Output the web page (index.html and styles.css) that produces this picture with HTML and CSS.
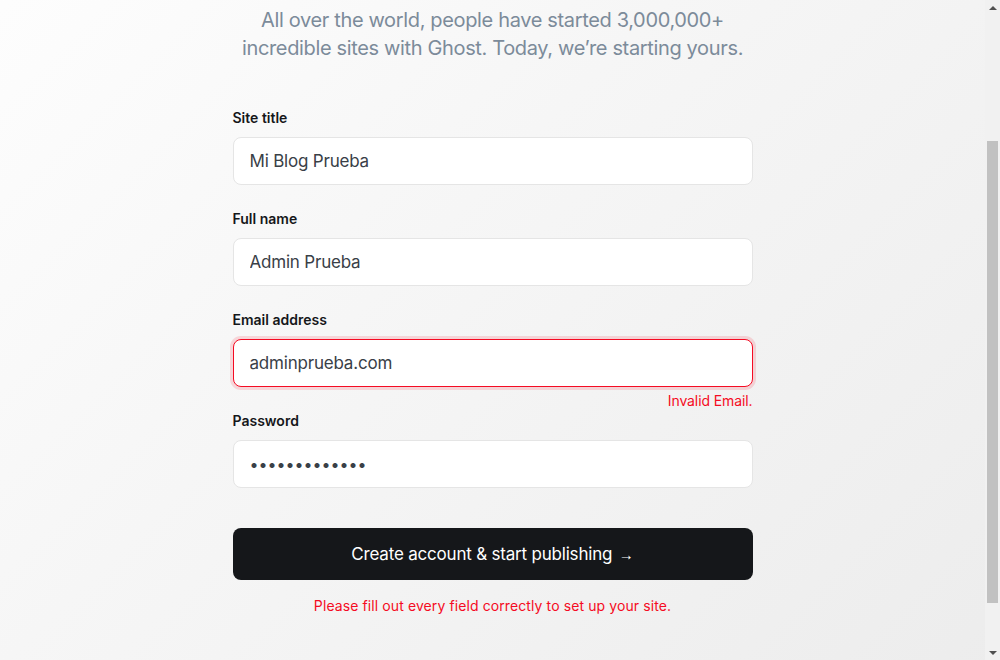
FILE: index.html
```html
<!DOCTYPE html>
<html lang="en">
<head>
<meta charset="utf-8">
<title>Ghost Admin - Setup</title>
<link rel="stylesheet" href="styles.css">
</head>
<body>
<main class="page">
  <header class="intro">
    <h1 class="title">Let’s get started.</h1>
    <p class="subtitle">All over the world, people have started 3,000,000+ incredible sites with Ghost. Today, we’re starting yours.</p>
  </header>
  <form class="setup-form" novalidate>
    <div class="field">
      <label class="label" for="site-title">Site title</label>
      <input class="input" id="site-title" type="text" value="Mi Blog Prueba">
      <div class="hint"></div>
    </div>
    <div class="field">
      <label class="label" for="full-name">Full name</label>
      <input class="input" id="full-name" type="text" value="Admin Prueba">
      <div class="hint"></div>
    </div>
    <div class="field">
      <label class="label" for="email">Email address</label>
      <input class="input input-error" id="email" type="email" value="adminprueba.com">
      <div class="hint hint-error">Invalid Email.</div>
    </div>
    <div class="field">
      <label class="label" for="password">Password</label>
      <input class="input" id="password" type="password" value="abcdefghijklm">
      <div class="hint"></div>
    </div>
    <button class="submit" type="button">Create account &amp; start publishing <span class="arrow">→</span></button>
    <p class="form-error">Please fill out every field correctly to set up your site.</p>
  </form>
</main>
<div class="scrollbar" aria-hidden="true">
  <div class="sb-btn sb-up"><span class="tri tri-up"></span></div>
  <div class="sb-track"><div class="sb-thumb"></div></div>
  <div class="sb-btn sb-down"><span class="tri tri-down"></span></div>
</div>
<script src="script.js"></script>
</body>
</html>
```

FILE: styles.css
```css
html, body {
  margin: 0;
  padding: 0;
}

body {
  font-family: Inter, "Noto Sans", "Liberation Sans", sans-serif;
  color: #15171a;
  background: #f4f4f4;
}

.page {
  box-sizing: border-box;
  min-height: 900px;
  margin-right: 15px;
  padding: 128px 0 103px;
  background: linear-gradient(135deg, #ffffff 0%, #f6f6f6 45%, #ececec 100%);
  display: flex;
  flex-direction: column;
  align-items: center;
}

.intro {
  width: 540px;
  text-align: center;
}

.title {
  margin: 0 0 14px;
  font-size: 36px;
  line-height: 44px;
  font-weight: 700;
  color: #15171a;
  letter-spacing: -0.5px;
}

.subtitle {
  margin: 0;
  font-size: 20px;
  line-height: 28px;
  font-weight: 400;
  letter-spacing: -0.35px;
  color: #7c8b9a;
}

.setup-form {
  width: 520px;
  margin-top: 45px;
  display: flex;
  flex-direction: column;
}

.field {
  display: flex;
  flex-direction: column;
}

.label {
  font-size: 14px;
  line-height: 20px;
  padding-top: 1px;
  font-weight: 600;
  color: #15171a;
  margin-bottom: 9px;
}

.input {
  box-sizing: border-box;
  height: 48px;
  width: 100%;
  padding: 0 16px;
  border: 1px solid #e5e5e5;
  border-radius: 8px;
  background: #ffffff;
  font-family: Inter, "Noto Sans", "Liberation Sans", sans-serif;
  font-size: 17px;
  letter-spacing: -0.2px;
  color: #394047;
  outline: none;
}

.input[type="password"] {
  letter-spacing: 0;
  font-size: 16px;
}

.input-error {
  border-color: #f50b23;
  box-shadow: 0 0 0 3px rgba(245, 11, 35, 0.14);
}

.hint {
  height: 23px;
  box-sizing: border-box;
  padding-top: 4px;
  font-size: 14px;
  line-height: 20px;
  text-align: right;
}

.hint-error {
  color: #f50b23;
  letter-spacing: -0.1px;
}

.submit {
  margin-top: 17px;
  height: 52px;
  width: 100%;
  border: 0;
  border-radius: 8px;
  background: #15171a;
  color: #ffffff;
  font-family: Inter, "Noto Sans", "Liberation Sans", sans-serif;
  font-size: 17px;
  letter-spacing: -0.2px;
  font-weight: 400;
  cursor: pointer;
}

.arrow {
  font-family: "Liberation Sans", Arial, sans-serif;
  font-size: 15px;
  margin-left: 2px;
}

.form-error {
  margin: 15px 0 0;
  font-size: 14px;
  line-height: 22px;
  letter-spacing: 0.1px;
  text-align: center;
  color: #f50b23;
}

.scrollbar {
  position: fixed;
  top: 0;
  right: 0;
  bottom: 0;
  width: 15px;
  background: #f1f1f1;
  display: flex;
  flex-direction: column;
}

.sb-btn {
  height: 15px;
  flex: 0 0 15px;
  display: flex;
  align-items: center;
  justify-content: center;
}

.sb-track {
  flex: 1;
  position: relative;
}

.sb-thumb {
  position: absolute;
  left: 2px;
  right: 2px;
  top: 126px;
  height: 462px;
  background: #c1c1c1;
}

.tri {
  width: 0;
  height: 0;
  border-left: 4px solid transparent;
  border-right: 4px solid transparent;
}

.tri-up {
  border-bottom: 4px solid #505050;
}

.tri-down {
  border-top: 4px solid #505050;
}
```

FILE: script.js
```js
window.scrollTo(0, 180);
window.addEventListener('load', function () {
  window.scrollTo(0, 180);
});
```
